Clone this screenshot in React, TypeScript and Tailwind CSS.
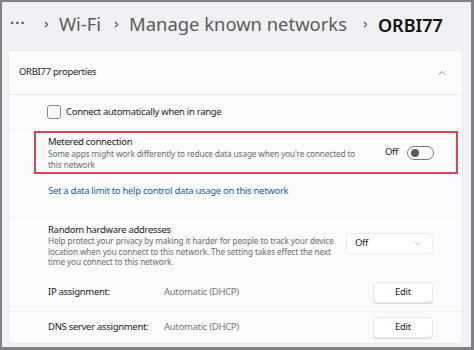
import { ChevronRight, ChevronUp, ChevronDown } from 'lucide-react';

const font = { fontFamily: '"Noto Sans", "Open Sans", Arial, sans-serif' };

function Toggle() {
  return (
    <div className="w-[27px] h-[14px] rounded-full border border-[#7a7a7a] flex items-center pl-[3px]">
      <div className="w-[8px] h-[8px] rounded-full bg-[#5a5a5a]" />
    </div>
  );
}

function EditButton() {
  return (
    <button className="w-[60px] h-[21px] rounded-[4px] bg-white border border-[#e8e8e8] text-[9.5px] tracking-[-0.2px] text-[#1b1b1b] shadow-[0_1px_0_#dcdcdc]">
      Edit
    </button>
  );
}

export default function App() {
  return (
    <div className="w-[474px] h-[350px] bg-[#7f8186] pl-[2px] pt-[2px] pr-[3px] pb-[3px]" style={font}>
      <div className="w-full h-full bg-[#eff1f5] flex flex-col">
        {/* Breadcrumb */}
        <div className="h-[48px] flex items-center pl-[8px] pb-[3px] text-[#5b5b5b] whitespace-nowrap">
          <span className="text-[15px] tracking-[1px] leading-none mb-[5px] font-bold w-[18px]">···</span>
          <ChevronRight className="w-[9px] h-[9px] ml-[14px] mr-[8px] text-[#555]" strokeWidth={3} />
          <span className="text-[18.4px] leading-none">Wi-Fi</span>
          <ChevronRight className="w-[9px] h-[9px] ml-[11px] mr-[8px] text-[#555]" strokeWidth={3} />
          <span className="text-[18.4px] leading-none">Manage known networks</span>
          <ChevronRight className="w-[9px] h-[9px] ml-[14px] mr-[8px] text-[#555]" strokeWidth={3} />
          <span className="text-[18px] leading-none font-semibold text-[#111]">ORBI77</span>
        </div>

        {/* Card */}
        <div className="flex-1 ml-[6px] mr-[8px] mb-[3px] bg-[#fafbfc] border border-[#e9eaed] rounded-[4px] flex flex-col text-[9.5px] tracking-[-0.3px] text-[#1b1b1b]">
          <div className="h-[44px] flex items-center justify-between px-[10px] border-b border-[#eaebee] bg-[#fcfcfd]">
            <span>ORBI77 properties</span>
            <ChevronUp className="w-[12px] h-[12px] text-[#555] mr-[4px]" strokeWidth={1.5} />
          </div>

          <div className="h-[35px] flex items-center pl-[38px] border-b border-[#eeeff1]">
            <div className="w-[14px] h-[14px] rounded-[3px] border border-[#8a8a8a] bg-white" />
            <span className="ml-[5px]">Connect automatically when in range</span>
          </div>

          <div className="mt-[1px] ml-[25px] w-[424px] h-[43px] border-2 border-[#d8474f] flex items-center pl-[12px] pr-[22px]">
            <div className="flex-1 flex flex-col">
              <span className="leading-[12px]">Metered connection</span>
              <span className="text-[8.2px] tracking-[-0.1px] leading-[11px] text-[#6b6b6b] w-[322px]">
                Some apps might work differently to reduce data usage when you're connected to this network
              </span>
            </div>
            <span className="mr-[9px]">Off</span>
            <Toggle />
          </div>

          <div className="h-[43px] flex items-center pl-[39px] pb-[8px]">
            <span className="text-[#1f5ba8]">Set a data limit to help control data usage on this network</span>
          </div>

          <div className="h-[57px] flex items-center pl-[39px] pr-[29px] border-t border-[#f0f1f3]">
            <div className="flex-1 flex flex-col">
              <span className="leading-[12px]">Random hardware addresses</span>
              <span className="text-[8.2px] tracking-[-0.1px] leading-[10.5px] text-[#6b6b6b] w-[290px]">
                Help protect your privacy by making it harder for people to track your device location when you connect to this network. The setting takes effect the next time you connect to this network.
              </span>
            </div>
            <div className="w-[87px] h-[21px] mb-[6px] bg-white border border-[#ececec] rounded-[4px] flex items-center justify-between pl-[8px] pr-[10px]">
              <span>Off</span>
              <ChevronDown className="w-[9px] h-[9px] text-[#888]" strokeWidth={1.5} />
            </div>
          </div>

          <div className="h-[38px] flex items-center pl-[39px] pr-[29px] border-b border-[#eeeff1] whitespace-nowrap">
            <span className="w-[116px]">IP assignment:</span>
            <span className="flex-1 text-[#777]">Automatic (DHCP)</span>
            <EditButton />
          </div>

          <div className="flex-1 flex items-center pl-[39px] pr-[29px] whitespace-nowrap">
            <span className="w-[116px]">DNS server assignment:</span>
            <span className="flex-1 text-[#777]">Automatic (DHCP)</span>
            <EditButton />
          </div>
        </div>
      </div>
    </div>
  );
}
